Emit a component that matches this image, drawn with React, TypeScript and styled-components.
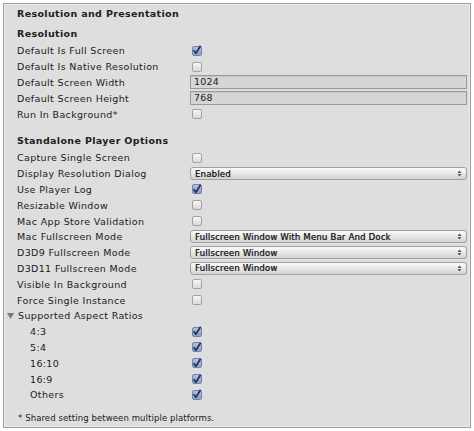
import styled, { createGlobalStyle } from "styled-components";

const GlobalStyle = createGlobalStyle`
  html, body {
    margin: 0;
    padding: 0;
    background: #ffffff;
  }
  body {
    font-family: "DejaVu Sans", "Liberation Sans", sans-serif;
  }
`;

type Field =
  | { kind: "check"; label: string; checked?: boolean; indent?: boolean }
  | { kind: "text"; label: string; value: string }
  | { kind: "select"; label: string; value: string }
  | { kind: "foldout"; label: string };

const resolution: Field[] = [
  { kind: "check", label: "Default Is Full Screen", checked: true },
  { kind: "check", label: "Default Is Native Resolution" },
  { kind: "text", label: "Default Screen Width", value: "1024" },
  { kind: "text", label: "Default Screen Height", value: "768" },
  { kind: "check", label: "Run In Background*" },
];

const standalone: Field[] = [
  { kind: "check", label: "Capture Single Screen" },
  { kind: "select", label: "Display Resolution Dialog", value: "Enabled" },
  { kind: "check", label: "Use Player Log", checked: true },
  { kind: "check", label: "Resizable Window" },
  { kind: "check", label: "Mac App Store Validation" },
  { kind: "select", label: "Mac Fullscreen Mode", value: "Fullscreen Window With Menu Bar And Dock" },
  { kind: "select", label: "D3D9 Fullscreen Mode", value: "Fullscreen Window" },
  { kind: "select", label: "D3D11 Fullscreen Mode", value: "Fullscreen Window" },
  { kind: "check", label: "Visible In Background" },
  { kind: "check", label: "Force Single Instance" },
  { kind: "foldout", label: "Supported Aspect Ratios" },
  { kind: "check", label: "4:3", checked: true, indent: true },
  { kind: "check", label: "5:4", checked: true, indent: true },
  { kind: "check", label: "16:10", checked: true, indent: true },
  { kind: "check", label: "16:9", checked: true, indent: true },
  { kind: "check", label: "Others", checked: true, indent: true },
];

const CheckBox = ({ checked }: { checked?: boolean }) => (
  <Box $checked={checked}>
    {checked && (
      <svg width="10" height="10" viewBox="0 0 10 10">
        <path d="M1.6 5.2 L3.9 8.2 L8.6 0.8" fill="none" stroke="#22305a" strokeWidth="1.7" strokeLinejoin="round" />
      </svg>
    )}
  </Box>
);

const Arrows = () => (
  <svg width="5" height="7" viewBox="0 0 5 7">
    <path d="M0.5 3 L2.5 0.5 L4.5 3 Z" fill="#555" />
    <path d="M0.5 4 L2.5 6.5 L4.5 4 Z" fill="#555" />
  </svg>
);

const Control = ({ field }: { field: Field }) => {
  if (field.kind === "check") return <CheckBox checked={field.checked} />;
  if (field.kind === "text") return <TextField>{field.value}</TextField>;
  if (field.kind === "select")
    return (
      <Select>
        <span>{field.value}</span>
        <Arrows />
      </Select>
    );
  return null;
};

const Rows = ({ fields }: { fields: Field[] }) => (
  <>
    {fields.map((f) => (
      <Row key={f.label}>
        {f.kind === "foldout" ? (
          <Foldout>
            <svg width="7" height="6" viewBox="0 0 7 6">
              <path d="M0 0 L7 0 L3.5 6 Z" fill="#7a7a7a" />
            </svg>
            {f.label}
          </Foldout>
        ) : (
          <Label $indent={f.kind === "check" && f.indent}>{f.label}</Label>
        )}
        <Control field={f} />
      </Row>
    ))}
  </>
);

export default function App() {
  return (
    <>
      <GlobalStyle />
      <Page>
        <Panel>
          <Title>Resolution and Presentation</Title>
          <Section>Resolution</Section>
          <Rows fields={resolution} />
          <Section $gap>Standalone Player Options</Section>
          <Rows fields={standalone} />
          <Note>* Shared setting between multiple platforms.</Note>
        </Panel>
      </Page>
    </>
  );
}

const Page = styled.div`
  padding: 3px 3px 0 3px;
`;

const Panel = styled.div`
  height: 425px;
  box-sizing: border-box;
  background: #dedede;
  border: 1px solid #9c9c9c;
  box-shadow: inset 0 0 0 1px #ececec;
  padding: 2px 3px 0 13px;
  color: #202020;
  font-size: 9.5px;
  letter-spacing: 0.35px;
`;

const Title = styled.div`
  height: 16px;
  line-height: 16px;
  font-weight: bold;
  margin-bottom: 4px;
`;

const Section = styled.div<{ $gap?: boolean }>`
  height: 16px;
  line-height: 16px;
  font-weight: bold;
  margin-top: ${(p) => (p.$gap ? "11px" : "0")};
  margin-bottom: 1px;
`;

const Row = styled.div`
  display: grid;
  grid-template-columns: 173px 1fr;
  align-items: center;
  height: 15.8px;
`;

const Label = styled.div<{ $indent?: boolean }>`
  padding-left: ${(p) => (p.$indent ? "13px" : "0")};
  white-space: nowrap;
`;

const Foldout = styled.div`
  display: flex;
  align-items: center;
  gap: 4px;
  margin-left: -10px;
  white-space: nowrap;
`;

const Box = styled.div<{ $checked?: boolean }>`
  width: 10px;
  height: 10px;
  margin-left: 2px;
  box-sizing: border-box;
  border: 1px solid ${(p) => (p.$checked ? "#7083ab" : "#a2a2a2")};
  border-radius: 2px;
  background: ${(p) =>
    p.$checked
      ? "linear-gradient(#b1bfdb, #8ea1c8)"
      : "linear-gradient(#f7f7f7, #d9d9d9)"};
  display: flex;
  align-items: center;
  justify-content: center;
  svg {
    flex: none;
    margin-top: -1px;
  }
`;

const TextField = styled.div`
  height: 14px;
  line-height: 12px;
  box-sizing: border-box;
  border: 1px solid #9a9a9a;
  box-shadow: inset 0 1px 0 #c6c6c6;
  background: #d6d6d6;
  padding-left: 3px;
  letter-spacing: 0.2px;
`;

const Select = styled.div`
  height: 13px;
  box-sizing: border-box;
  border: 1px solid #a0a0a0;
  border-radius: 3px;
  background: linear-gradient(#fafafa, #e6e6e6 55%, #d2d2d2);
  display: flex;
  align-items: center;
  justify-content: space-between;
  padding: 0 4px 0 4px;
  font-size: 8.5px;
  letter-spacing: 0.2px;
  color: #222222;
  text-shadow: 0.3px 0 0 #444;
`;

const Note = styled.div`
  margin-top: 10px;
  padding-left: 1px;
  font-size: 8.5px;
  letter-spacing: 0.1px;
`;
